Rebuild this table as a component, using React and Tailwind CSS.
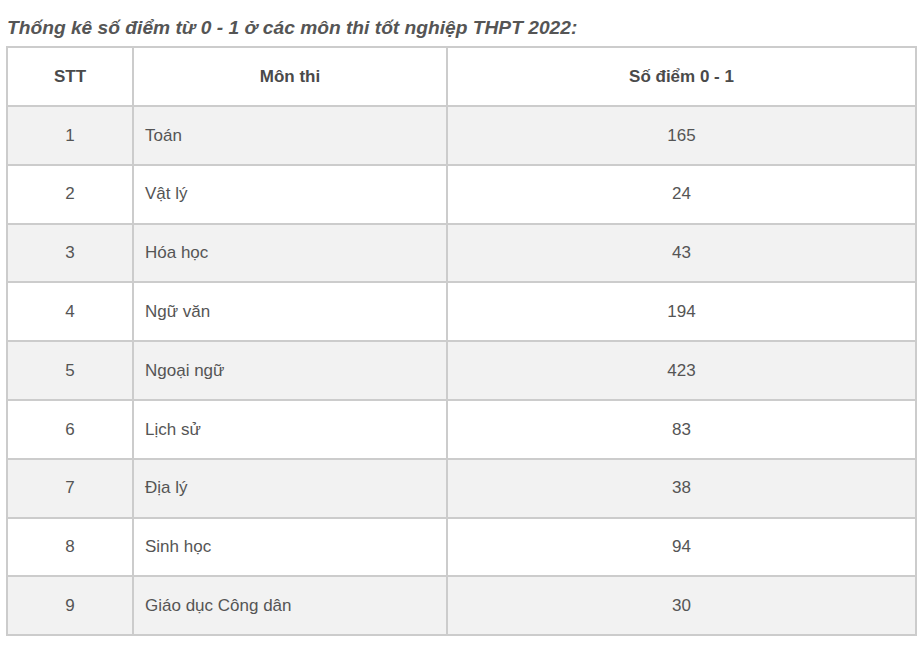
import React from 'react';

const rows = [
  ['1', 'Toán', '165'],
  ['2', 'Vật lý', '24'],
  ['3', 'Hóa học', '43'],
  ['4', 'Ngữ văn', '194'],
  ['5', 'Ngoại ngữ', '423'],
  ['6', 'Lịch sử', '83'],
  ['7', 'Địa lý', '38'],
  ['8', 'Sinh học', '94'],
  ['9', 'Giáo dục Công dân', '30'],
];

const App = () => {
  return (
    <div className="bg-white min-h-[656px] pl-[6px] pt-[15px] text-[#333] font-['Liberation_Sans',Arial,sans-serif]">
      <h3 className="text-[19.2px] leading-[26px] font-bold italic text-[#555] mb-[5px] pl-[1px]">
        Thống kê số điểm từ 0 - 1 ở các môn thi tốt nghiệp THPT 2022:
      </h3>
      <table className="border-collapse table-fixed w-[911px] border-2 border-[#cccccc]">
        <colgroup>
          <col className="w-[126px]" />
          <col className="w-[314px]" />
          <col />
        </colgroup>
        <thead>
          <tr className="h-[59px] bg-white">
            <th className="border-2 border-[#cccccc] text-center text-[17px] font-bold text-[#4a4a4a]">STT</th>
            <th className="border-2 border-[#cccccc] text-center text-[17px] font-bold text-[#4a4a4a]">Môn thi</th>
            <th className="border-2 border-[#cccccc] text-center text-[17px] font-bold text-[#4a4a4a]">Số điểm 0 - 1</th>
          </tr>
        </thead>
        <tbody>
          {rows.map((r, i) => (
            <tr key={r[0]} className={`h-[58.8px] ${i % 2 === 0 ? 'bg-[#f2f2f2]' : 'bg-white'}`}>
              <td className="border-2 border-[#cccccc] text-center text-[17px] text-[#555]">{r[0]}</td>
              <td className="border-2 border-[#cccccc] text-left pl-[11px] text-[17px] text-[#555]">{r[1]}</td>
              <td className="border-2 border-[#cccccc] text-center text-[17px] text-[#555]">{r[2]}</td>
            </tr>
          ))}
        </tbody>
      </table>
    </div>
  );
};

export default App;
